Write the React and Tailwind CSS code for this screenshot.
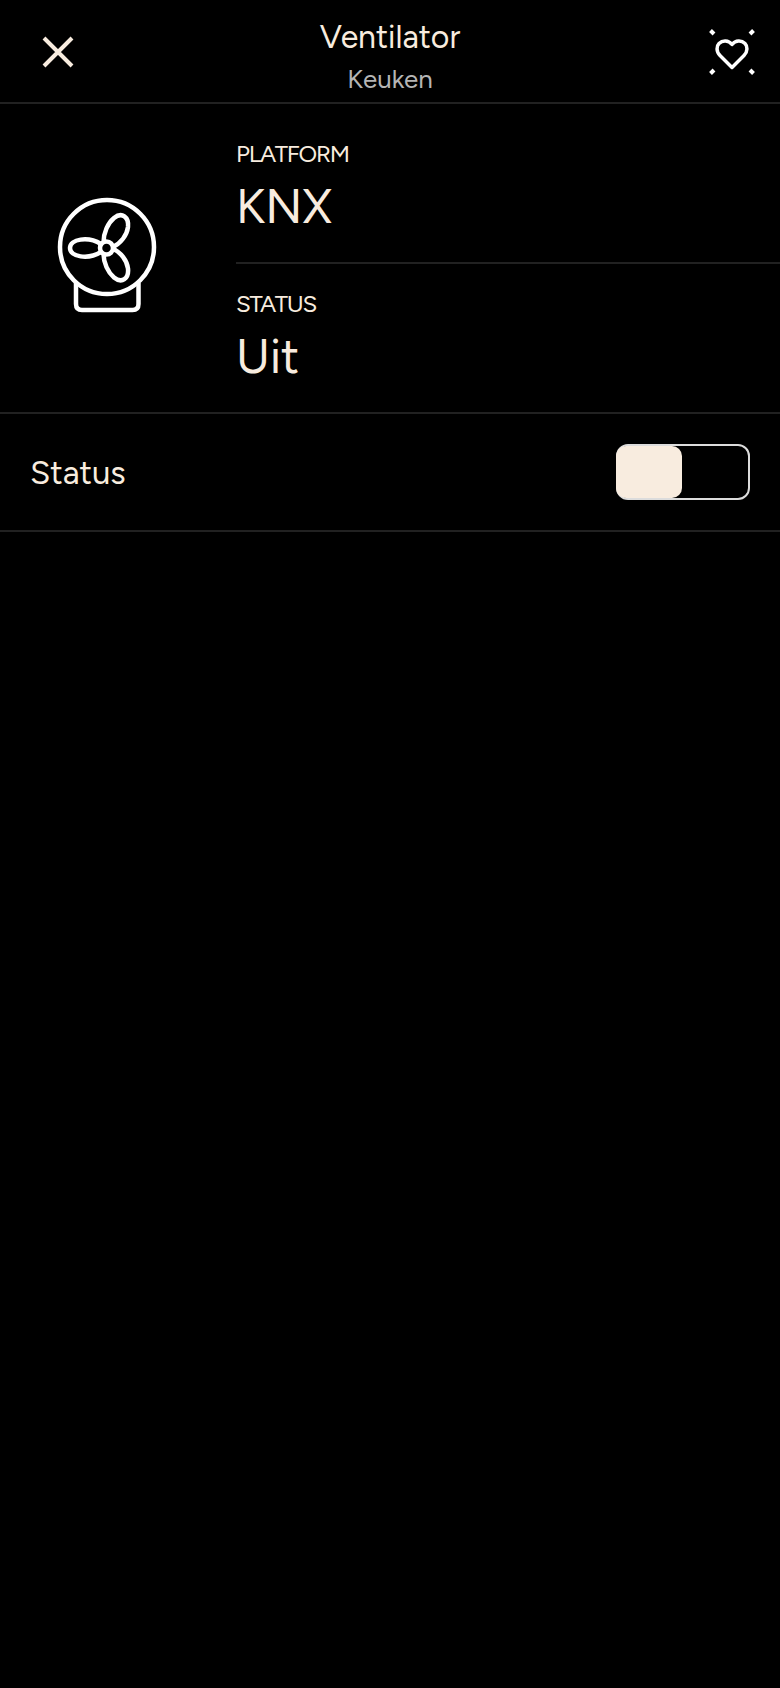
import React, { useState } from 'react';

const CloseIcon = () => (
  <svg className="w-8 h-8" viewBox="0 0 32 32" fill="none" stroke="currentColor" strokeWidth="4">
    <path d="M2 2L30 30M30 2L2 30" />
  </svg>
);

const FavoriteIcon = () => (
  <svg className="w-12 h-12" viewBox="0 0 48 48" fill="none" stroke="currentColor" strokeWidth="4">
    <path
      d="M24 39.500L12 27.500C8 23.500 8.500 18 11 15.500C14.500 12 20.500 12 24 16.500C27.500 12 33.500 12 37 15.500C39.500 18 40 23.500 36 27.500Z"
      strokeWidth="3.500"
      strokeLinejoin="round"
    />
    <path d="M2.500 2.500L6 6M45.500 2.500L42 6M2.500 45.500L6 42M45.500 45.500L42 42" />
  </svg>
);

const FanIcon = () => (
  <svg viewBox="0 0 100 116" className="w-[100px] h-[116px]" fill="none" stroke="currentColor" strokeWidth="4.500">
    <circle cx="50" cy="50" r="47" />
    <path d="M19 86V107Q19 113 25 113H75.500Q81.500 113 81.500 107V86" />
    <circle cx="49.500" cy="51" r="6.500" />
    {/* Blades */}
    <path d="M44 47C31 39 13 42 13 51C13 60 31 63 44 55" />
    <path d="M46.500 45.500C46.500 35.500 51 26 57 21C65 14.500 72 20 71 30C70 38 64 46.500 55 50.500" />
    <path d="M46.500 56.500C46.500 66 51 75.500 57 80.500C65 87 72 81.500 71 71.500C70 63.500 64 55 55 51.500" />
  </svg>
);

const InfoItem = ({ label, value }) => (
  <div>
    <dt className="text-2xl leading-8 tracking-tighter uppercase">{label}</dt>
    <dd className="mt-2 text-5xl leading-[56px]">{value}</dd>
  </div>
);

const App = () => {
  const [isOn, setIsOn] = useState(false);

  return (
    <div className="min-h-screen bg-black text-[#f8ecdf] font-normal font-['Figtree','Lato',sans-serif]">
      {/* Header */}
      <header className="flex items-center h-[104px] pt-0.5 px-6 border-b-2 border-[#212121]">
        <div className="flex-1">
          <button type="button" aria-label="Sluiten" className="block ml-[18px]">
            <CloseIcon />
          </button>
        </div>
        <div className="pt-3.5 text-center">
          <h1 className="text-[32px] leading-10">Ventilator</h1>
          <p className="text-[26px] leading-[44px] text-[#b5b5b5]">Keuken</p>
        </div>
        <div className="flex-1">
          <button type="button" aria-label="Favoriet" className="block ml-auto text-white">
            <FavoriteIcon />
          </button>
        </div>
      </header>

      {/* Device info */}
      <section className="flex border-b-2 border-[#212121]">
        <div className="flex items-center pl-[57px] pb-1.5 w-[236px] text-white">
          <FanIcon />
        </div>
        <dl className="flex-1">
          <div className="pt-[34px] pb-7 border-b-2 border-[#212121]">
            <InfoItem label="Platform" value="KNX" />
          </div>
          <div className="pt-6 pb-7">
            <InfoItem label="Status" value="Uit" />
          </div>
        </dl>
      </section>

      {/* Status toggle */}
      <section className="flex items-center justify-between h-[118px] px-[30px] border-b-2 border-[#212121]">
        <label htmlFor="status" className="pt-0.5 text-[33px] leading-10">
          Status
        </label>
        <div className="relative w-[134px] h-14">
          <input
            id="status"
            type="checkbox"
            role="switch"
            checked={isOn}
            onChange={() => setIsOn(!isOn)}
            className="peer block w-full h-full appearance-none rounded-xl border-2 border-[#dcdcdc] cursor-pointer"
          />
          <span className="absolute left-0 inset-y-0.5 w-[66px] rounded-[10px] bg-[#f8ecdf] pointer-events-none peer-checked:left-auto peer-checked:right-0"></span>
        </div>
      </section>
    </div>
  );
};

export default App;
